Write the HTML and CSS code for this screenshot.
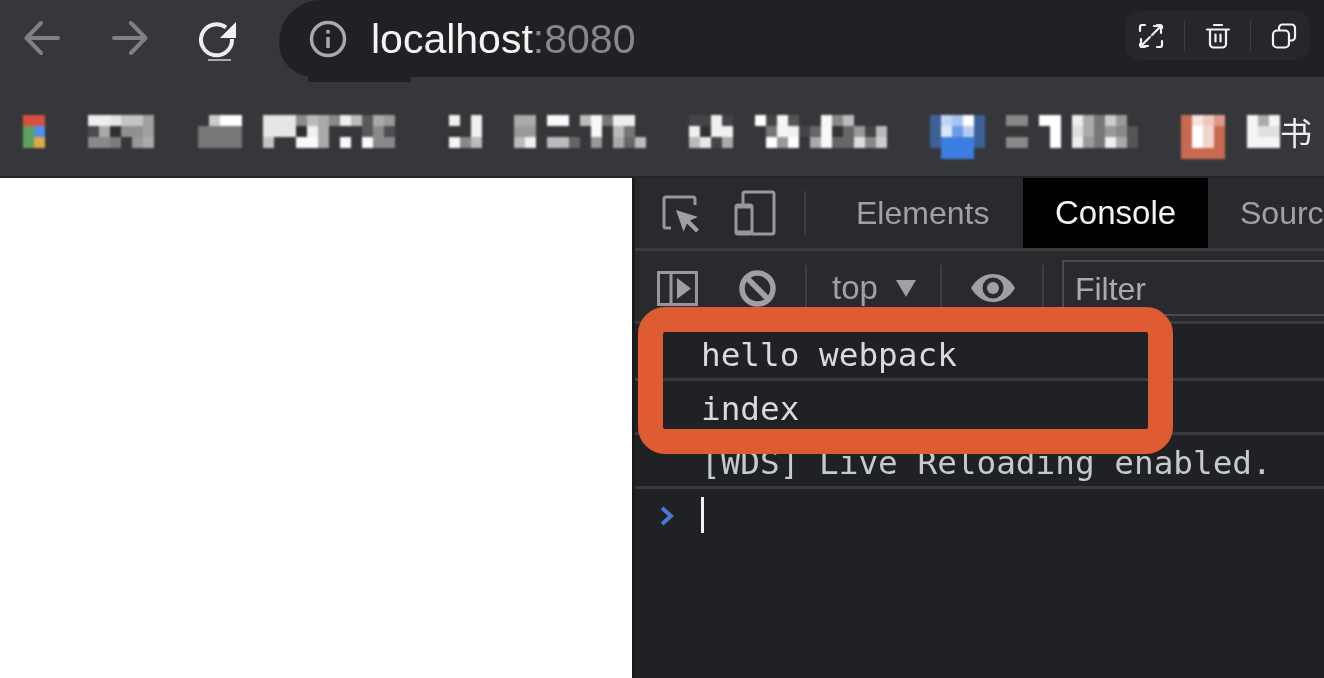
FILE: index.html
```html
<!DOCTYPE html>
<html lang="en">
<head>
<meta charset="utf-8">
<title>localhost:8080</title>
<link rel="stylesheet" href="styles.css">
</head>
<body>
<div class="screen">
  <header class="chrome">
    <div class="toolbar">
      <nav class="nav">
        <svg class="nav-icon" width="36" height="36" viewBox="0 0 36 36"><path d="M34 18H3M17 3 2.500 18 17 33"/></svg>
        <svg class="nav-icon forward" width="36" height="36" viewBox="0 0 36 36"><path d="M2 18h31M19 3l14.500 15L19 33"/></svg>
        <svg class="reload" width="40" height="44" viewBox="0 0 40 44">
          <path class="reload-arc" d="M27 7.500A15.500 15.500 0 1 0 33 19"/>
          <path class="reload-head" d="M37 2v16H21z"/>
          <path class="reload-line" d="M9 40h23"/>
        </svg>
      </nav>
      <div class="omnibox">
        <svg class="info" width="38" height="38" viewBox="0 0 38 38">
          <circle cx="19" cy="19" r="16.500"/>
          <path d="M19 17v11M19 10v3.500"/>
        </svg>
        <span class="url"><span class="host">localhost</span><span class="port">:8080</span></span>
        <div class="actions">
          <button class="action" type="button"><svg width="26" height="26" viewBox="0 0 26 26"><path d="M2 8V4a2 2 0 0 1 2-2h3M19 2h3a2 2 0 0 1 2 2v1M24 18v4a2 2 0 0 1-2 2h-3M7 24H4a2 2 0 0 1-2-2v-1M14 12l9-9M16 3h7v7M12 14l-9 9M3 16v7h7"/></svg></button>
          <button class="action" type="button"><svg width="26" height="26" viewBox="0 0 26 26"><path d="M2 6.500h22M9 2h8M5 7v14a3.500 3.500 0 0 0 3.500 3.500h9A3.500 3.500 0 0 0 21 21V7M10.500 11.500v7M15.500 11.500v7"/></svg></button>
          <button class="action" type="button"><svg width="26" height="26" viewBox="0 0 26 26"><path d="M8 7V5a3.500 3.500 0 0 1 3.500-3.500h9A3.500 3.500 0 0 1 24 5v9a3.500 3.500 0 0 1-3.500 3.500H18"/><rect x="2" y="7.500" width="16" height="17" rx="4"/></svg></button>
        </div>
      </div>
    </div>
    <div class="bookmarks">
      <svg class="mosaic" width="22" height="33" viewBox="0 0 22 33"><rect width="22" height="11" fill="#d8503f"/><rect y="11" width="11" height="22" fill="#5da35f"/><rect x="11" y="11" width="11" height="11" fill="#4f90ea"/><rect x="11" y="22" width="11" height="11" fill="#dfa64a"/></svg>

      <svg class="mosaic m43" width="66" height="33" viewBox="0 0 66 33">
        <rect width="22" height="11" fill="#eee"/><rect x="22" width="11" height="11" fill="#e4e4e4"/><rect x="33" width="22" height="11" fill="#c4c4c4"/><rect x="55" width="11" height="22" fill="#a0a0a0"/>
        <rect y="11" width="11" height="11" fill="#4a4b4f"/><rect x="11" y="11" width="11" height="11" fill="#aaa"/><rect x="22" y="11" width="11" height="11" fill="#2f3033"/><rect x="33" y="11" width="22" height="11" fill="#909090"/>
        <rect y="22" width="22" height="11" fill="#8a8a8a"/><rect x="22" y="22" width="11" height="11" fill="#7c7c7c"/><rect x="44" y="22" width="11" height="11" fill="#999"/><rect x="55" y="22" width="11" height="11" fill="#aaa"/>
      </svg>

      <svg class="mosaic m44" width="44" height="33" viewBox="0 0 44 33"><rect x="11" width="11" height="11" fill="#ccc"/><rect x="22" width="22" height="11" fill="#fff"/><rect y="11" width="44" height="22" fill="#777"/></svg>

      <svg class="mosaic m21" width="132" height="33" viewBox="0 0 132 33">
        <rect width="33" height="22" fill="#e6e6e6"/><rect x="33" width="11" height="11" fill="#8c8c8c"/><rect x="44" width="11" height="11" fill="#bbb"/><rect x="55" width="11" height="33" fill="#aaa"/><rect x="66" width="11" height="11" fill="#888"/><rect x="77" width="11" height="11" fill="#eee"/><rect x="88" width="11" height="11" fill="#bbb"/><rect x="99" width="11" height="22" fill="#58595c"/><rect x="110" width="11" height="11" fill="#aaa"/><rect x="121" width="11" height="11" fill="#999"/>
        <rect x="33" y="11" width="11" height="11" fill="#2e2f32"/><rect x="44" y="11" width="11" height="11" fill="#f0f0f0"/><rect x="110" y="11" width="11" height="11" fill="#8a8a8a"/><rect x="121" y="11" width="11" height="11" fill="#4c4d50"/>
        <rect y="22" width="11" height="11" fill="#c4c4c4"/><rect x="33" y="22" width="22" height="11" fill="#fafafa"/><rect x="77" y="22" width="11" height="11" fill="#fafafa"/><rect x="99" y="22" width="11" height="11" fill="#fafafa"/><rect x="110" y="22" width="22" height="11" fill="#888"/>
      </svg>

      <svg class="mosaic m54" width="33" height="33" viewBox="0 0 33 33"><rect width="11" height="11" fill="#f0f0f0"/><rect x="22" width="11" height="22" fill="#f0f0f0"/><rect y="22" width="11" height="11" fill="#f5f5f5"/><rect x="11" y="22" width="11" height="11" fill="#888"/><rect x="22" y="22" width="11" height="11" fill="#bbb"/></svg>

      <svg class="mosaic m32" width="132" height="33" viewBox="0 0 132 33">
        <rect width="22" height="11" fill="#aaa"/><rect x="33" width="22" height="11" fill="#fafafa"/><rect x="66" width="11" height="11" fill="#bbb"/><rect x="77" width="11" height="22" fill="#f8f8f8"/><rect x="88" width="11" height="11" fill="#777"/><rect x="99" width="22" height="11" fill="#eee"/>
        <rect y="11" width="22" height="11" fill="#999"/><rect x="99" y="11" width="11" height="11" fill="#bbb"/><rect x="110" y="11" width="11" height="11" fill="#777"/>
        <rect y="22" width="11" height="11" fill="#bbb"/><rect x="11" y="22" width="11" height="11" fill="#f0f0f0"/><rect x="33" y="22" width="22" height="11" fill="#bbb"/><rect x="55" y="22" width="11" height="11" fill="#666"/><rect x="77" y="22" width="11" height="11" fill="#999"/><rect x="99" y="22" width="11" height="11" fill="#aaa"/><rect x="110" y="22" width="11" height="11" fill="#666"/><rect x="121" y="22" width="11" height="11" fill="#bbb"/>
      </svg>

      <svg class="mosaic m43" width="44" height="33" viewBox="0 0 44 33">
        <rect width="22" height="11" fill="#444548"/><rect x="22" width="11" height="22" fill="#f0f0f0"/><rect x="33" width="11" height="11" fill="#444548"/>
        <rect y="11" width="11" height="11" fill="#f0f0f0"/><rect x="11" y="11" width="11" height="11" fill="#2f3033"/><rect x="33" y="11" width="11" height="11" fill="#f0f0f0"/>
        <rect y="22" width="11" height="11" fill="#bbb"/><rect x="11" y="22" width="11" height="11" fill="#e8e8e8"/><rect x="22" y="22" width="11" height="11" fill="#444548"/><rect x="33" y="22" width="11" height="11" fill="#aaa"/>
      </svg>

      <svg class="mosaic m22" width="132" height="33" viewBox="0 0 132 33">
        <rect width="11" height="11" fill="#fff"/><rect x="11" width="11" height="11" fill="#444548"/><rect x="22" width="11" height="22" fill="#f5f5f5"/><rect x="33" width="11" height="11" fill="#555"/><rect x="66" width="11" height="33" fill="#f8f8f8"/><rect x="77" width="11" height="11" fill="#888"/><rect x="88" width="11" height="11" fill="#bbb"/>
        <rect x="11" y="11" width="11" height="11" fill="#777"/><rect x="33" y="11" width="11" height="11" fill="#f0f0f0"/><rect x="44" y="11" width="11" height="11" fill="#444548"/><rect x="55" y="11" width="11" height="11" fill="#666"/><rect x="77" y="11" width="11" height="11" fill="#333437"/><rect x="88" y="11" width="11" height="22" fill="#666"/><rect x="99" y="11" width="11" height="11" fill="#999"/><rect x="110" y="11" width="11" height="11" fill="#444548"/><rect x="121" y="11" width="11" height="11" fill="#bbb"/>
        <rect x="11" y="22" width="11" height="11" fill="#fff"/><rect x="22" y="22" width="11" height="11" fill="#999"/><rect x="33" y="22" width="11" height="11" fill="#fff"/><rect x="55" y="22" width="11" height="11" fill="#aaa"/><rect x="77" y="22" width="11" height="11" fill="#666"/><rect x="99" y="22" width="11" height="11" fill="#ddd"/><rect x="110" y="22" width="11" height="11" fill="#888"/><rect x="121" y="22" width="11" height="11" fill="#ccc"/>
      </svg>

      <svg class="mosaic m43 tall" width="55" height="44" viewBox="0 0 55 44">
        <rect width="55" height="33" fill="#3d6098"/><rect x="11" width="11" height="11" fill="#c0d6f5"/><rect x="22" width="11" height="11" fill="#a6c4f0"/><rect x="33" width="11" height="11" fill="#fff"/>
        <rect x="11" y="11" width="11" height="11" fill="#dbe6f8"/><rect x="22" y="11" width="11" height="11" fill="#6a9be8"/><rect x="33" y="11" width="11" height="11" fill="#b5ccf2"/>
        <rect x="11" y="22" width="33" height="22" fill="#3b7de0"/>
      </svg>

      <svg class="mosaic m21" width="132" height="33" viewBox="0 0 132 33">
        <rect width="22" height="11" fill="#888"/><rect y="22" width="22" height="11" fill="#888"/><rect x="33" width="22" height="11" fill="#fff"/><rect x="44" y="11" width="11" height="22" fill="#fff"/>
        <rect x="66" width="11" height="11" fill="#eee"/><rect x="77" width="11" height="11" fill="#aaa"/><rect x="88" width="11" height="33" fill="#777"/><rect x="99" width="11" height="11" fill="#ccc"/><rect x="110" width="11" height="11" fill="#999"/>
        <rect x="66" y="11" width="11" height="11" fill="#ddd"/><rect x="77" y="11" width="11" height="11" fill="#aaa"/><rect x="99" y="11" width="11" height="11" fill="#999"/><rect x="110" y="11" width="11" height="11" fill="#888"/><rect x="121" y="11" width="11" height="22" fill="#555"/>
        <rect x="66" y="22" width="11" height="11" fill="#eee"/><rect x="77" y="22" width="11" height="11" fill="#999"/><rect x="99" y="22" width="11" height="11" fill="#f0f0f0"/><rect x="110" y="22" width="11" height="11" fill="#aaa"/>
      </svg>

      <svg class="mosaic m43 tall" width="44" height="44" viewBox="0 0 44 44">
        <rect width="44" height="44" fill="#c96a50"/><rect x="11" width="11" height="11" fill="#f5e5e0"/><rect x="22" width="11" height="11" fill="#f0c8bb"/><rect x="33" width="11" height="11" fill="#dd9a88"/>
        <rect x="11" y="11" width="11" height="22" fill="#fff"/><rect x="22" y="11" width="11" height="22" fill="#f0d5cc"/>
      </svg>

      <svg class="mosaic m22" width="33" height="33" viewBox="0 0 33 33"><rect width="33" height="33" fill="#f5f5f5"/><rect x="11" width="11" height="11" fill="#aaa"/><rect x="11" y="11" width="22" height="11" fill="#e0e0e0"/></svg>
      <span class="bookmark-text">书</span>
    </div>
  </header>

  <main class="main">
    <div class="page"></div>
    <section class="devtools">
      <div class="tabs">
        <svg class="tool-icon inspect" width="40" height="40" viewBox="0 0 40 40">
          <path class="outline" d="M9 33H4a2 2 0 0 1-2-2V4a2 2 0 0 1 2-2h27a2 2 0 0 1 2 2v6"/>
          <path class="solid" d="m14 15 22 7-8 3.500 9 9-3 3-9-9-3.500 8z"/>
        </svg>
        <svg class="tool-icon device" width="42" height="46" viewBox="0 0 42 46">
          <path class="outline" d="M9 14V4a2 2 0 0 1 2-2h27a2 2 0 0 1 2 2v38a2 2 0 0 1-2 2H18"/>
          <rect class="outline" x="2" y="15" width="16" height="29" rx="2"/>
          <path class="outline thick" d="M2 42.500h16M2 16.500h16"/>
        </svg>
        <span class="sep sep-first"></span>
        <span class="tab tab-first">Elements</span>
        <span class="tab tab-active">Console</span>
        <span class="tab">Sources</span>
      </div>
      <div class="console-bar">
        <svg class="tool-icon sidebar" width="41" height="35" viewBox="0 0 41 35">
          <rect class="outline" x="1.500" y="1.500" width="38" height="32"/>
          <path class="outline" d="M14 1v33"/>
          <path class="solid" d="m20 7 14 10.500L20 28z"/>
        </svg>
        <svg class="tool-icon block" width="37" height="37" viewBox="0 0 37 37">
          <circle cx="18.500" cy="18.500" r="15.500"/>
          <path d="m8 8 21 21"/>
        </svg>
        <span class="sep sep-bar"></span>
        <span class="context">top</span>
        <svg class="caret-down" width="20" height="17" viewBox="0 0 20 17"><path d="M0 0h20L10 17z"/></svg>
        <span class="sep sep-eye"></span>
        <svg class="eye" width="44" height="28" viewBox="0 0 44 28">
          <path class="eye-shape" d="M0 14C6 4 14 0 22 0s16 4 22 14c-6 10-14 14-22 14S6 24 0 14z"/>
          <circle class="eye-ring" cx="22" cy="14" r="10.500"/>
          <circle class="eye-pupil" cx="22" cy="14" r="6"/>
        </svg>
        <span class="sep sep-filter"></span>
        <div class="filter">Filter</div>
      </div>
      <div class="log">
        <div class="log-row">hello webpack</div>
        <div class="log-row">index</div>
        <div class="log-row log-muted">[WDS] Live Reloading enabled.</div>
        <div class="prompt">
          <svg class="prompt-mark" width="16" height="20" viewBox="0 0 16 20"><path d="m3 2 9 8-9 8"/></svg>
          <span class="cursor"></span>
        </div>
      </div>
    </section>
  </main>
  <div class="highlight"></div>
</div>
</body>
</html>
```
FILE: styles.css
```css
* { box-sizing: border-box; }
html, body { margin: 0; padding: 0; background: #fff; }
body { width: 1324px; height: 678px; overflow: hidden; font-family: "Liberation Sans", Arial, sans-serif; }
.screen { position: relative; width: 1324px; height: 678px; overflow: hidden; display: flex; flex-direction: column; }

.chrome { height: 178px; flex: none; background: #36373b; border-bottom: 2px solid #232427; display: flex; flex-direction: column; }
.toolbar { height: 77px; flex: none; display: flex; }
.nav { display: flex; align-items: flex-start; padding: 20px 0 0 24px; filter: blur(.5px); }
.nav-icon { fill: none; stroke: #808185; stroke-width: 4; stroke-linecap: round; stroke-linejoin: round; }
.forward { margin-left: 52px; }
.reload { margin-left: 51px; fill: none; }
.reload-arc { stroke: #eee; stroke-width: 4; }
.reload-head { fill: #f2f2f2; }
.reload-line { stroke: #aaa; stroke-width: 2; }

.omnibox { position: relative; flex: 1; margin-left: 40px; display: flex; align-items: center; background: #202124; border-radius: 42px 0 0 34px; padding-left: 30px; }
.omnibox::after { content: ""; position: absolute; left: 29px; top: 70px; width: 103px; height: 12px; background: #202124; }
.info { flex: none; fill: none; stroke: #a8a9ab; stroke-width: 3.5; filter: blur(.4px); }
.url { margin-left: 24px; font-size: 41px; line-height: 44px; filter: blur(.4px); }
.host { color: #f4f4f4; }
.port { color: #87888b; }

.actions { position: absolute; right: 14px; top: 11px; width: 185px; height: 49px; display: flex; align-items: center; background: #26272a; border-radius: 14px; }
.action { width: 66px; height: 31px; margin: 0; padding: 0; background: none; border: 0; display: flex; align-items: center; justify-content: center; }
.action:first-child { width: 52px; margin-right: 7px; }
.action + .action { border-left: 1px solid #3d3e41; }
.action:last-child { width: 60px; padding-left: 20px; justify-content: flex-start; }
.action svg { fill: none; stroke: #f2f2f2; stroke-width: 2.200; stroke-linecap: round; stroke-linejoin: round; }

.bookmarks { flex: 1; display: flex; align-items: flex-start; padding: 38px 0 0 23px; }
.mosaic { flex: none; filter: blur(.8px); }
.m21 { margin-left: 21px; }
.m22 { margin-left: 22px; }
.m32 { margin-left: 32px; }
.m43 { margin-left: 43px; }
.m44 { margin-left: 44px; }
.m54 { margin-left: 54px; }
.bookmark-text { font-family: "Noto Sans CJK SC", sans-serif; font-size: 32px; line-height: 33px; color: #eee; filter: blur(.3px); }

.main { flex: 1; display: flex; min-height: 0; }
.page { width: 632px; flex: none; background: #fff; }
.devtools { flex: 1; min-width: 0; overflow: hidden; background: #202124; border-left: 3px solid #1a1b1d; display: flex; flex-direction: column; }

.tabs { height: 73px; flex: none; display: flex; align-items: center; background: #292a2d; border-bottom: 3px solid #3a3b3e; white-space: nowrap; filter: blur(.4px); }
.tool-icon { flex: none; fill: none; }
.outline { fill: none; stroke: #97989a; stroke-width: 3; }
.thick { stroke-width: 4; }
.solid { fill: #9fa0a2; stroke: none; }
.inspect { margin-left: 27px; margin-top: 4px; }
.device { margin-left: 32px; }
.sep { flex: none; width: 2px; background: #3d3e41; }
.sep-first { height: 44px; margin-left: 28px; }
.tab { font-size: 32px; color: #9fa1a4; height: 70px; line-height: 70px; padding: 0 32px; flex: none; }
.tab-first { margin-left: 50px; padding: 0; width: 167px; }
.tab-active { background: #000; color: #f4f4f4; width: 185px; padding: 0 0 0 32px; font-size: 33px; }

.console-bar { height: 73px; flex: none; display: flex; align-items: center; background: #292a2d; border-bottom: 3px solid #3a3b3e; padding-top: 4px; white-space: nowrap; filter: blur(.4px); }
.sidebar { margin-left: 22px; }
.block { margin-left: 41px; }
.block circle, .block path { stroke: #9fa0a2; stroke-width: 5.500; fill: none; }
.sep-bar { height: 46px; margin-left: 29px; }
.context { font-size: 33px; color: #9fa1a4; margin-left: 25px; }
.caret-down { fill: #9fa0a2; margin-left: 18px; flex: none; }
.sep-eye { height: 46px; margin-left: 24px; }
.eye { margin-left: 29px; flex: none; }
.eye-shape { fill: #9fa0a2; }
.eye-ring { fill: #292a2d; }
.eye-pupil { fill: #9fa0a2; }
.sep-filter { height: 46px; margin-left: 27px; }
.filter { flex: 1; height: 56px; margin-left: 18px; border: 2px solid #4a4b4e; border-right: 0; font-size: 32px; line-height: 55px; color: #a8aaad; padding-left: 11px; }

.log { flex: 1; background: #202124; padding-top: 3px; font-family: "DejaVu Sans Mono", "Liberation Mono", monospace; font-size: 32.700px; color: #d8dadd; }
.log-row { height: 54px; line-height: 56px; padding-left: 66px; border-bottom: 3px solid #3a3b3e; white-space: nowrap; filter: blur(.35px); }
.log-muted { color: #c6c9cd; }
.prompt { position: relative; height: 50px; display: flex; align-items: center; padding: 1px 0 0 24px; }
.prompt-mark { fill: none; stroke: #4a76d8; stroke-width: 4; flex: none; margin-top: 3px; }
.cursor { width: 3px; height: 36px; background: #f2f2f2; margin-left: 26px; }

.highlight { position: absolute; left: 638px; top: 307px; width: 535px; height: 147px; border: 25px solid #df5c33; border-radius: 27px; }
```
